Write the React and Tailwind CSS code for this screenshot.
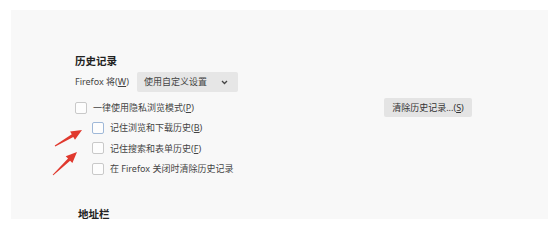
import React from "react";

function Arrow({ tail, tip }) {
  const dx = tip[0] - tail[0];
  const dy = tip[1] - tail[1];
  const len = Math.hypot(dx, dy);
  const ux = dx / len, uy = dy / len;
  const nx = -uy, ny = ux;
  const headLen = 11, headW = 4.8;
  const bx = tip[0] - headLen * ux, by = tip[1] - headLen * uy;
  const pts = [
    [tail[0] + 0.5 * nx, tail[1] + 0.5 * ny],
    [bx + 1.5 * nx, by + 1.5 * ny],
    [bx + headW * nx, by + headW * ny],
    [tip[0], tip[1]],
    [bx - headW * nx, by - headW * ny],
    [bx - 1.5 * nx, by - 1.5 * ny],
    [tail[0] - 0.5 * nx, tail[1] - 0.5 * ny],
  ];
  return <polygon points={pts.map((p) => p.join(",")).join(" ")} fill="#e0392e" />;
}

function Box({ focus }) {
  return (
    <span
      className={
        "inline-block w-[12px] h-[12px] rounded-[2px] bg-[#fdfdfd] border shrink-0 " +
        (focus ? "border-[#9fb8d8]" : "border-[#c9c9c9]")
      }
    />
  );
}

function Key({ k }) {
  return (
    <span>
      (<span className="underline underline-offset-[1px]">{k}</span>)
    </span>
  );
}

export default function App() {
  return (
    <div
      className="relative w-[548px] h-[229px] bg-white overflow-hidden text-[#444]"
      style={{ fontFamily: "'Noto Sans', 'Noto Sans CJK SC', sans-serif" }}
    >
      <div className="ml-[11px] mt-[10px] h-[209px] bg-[#f8f8f8] overflow-hidden pl-[64px] pt-[44px]">
        <div className="h-[14px] leading-[14px] text-[10.5px] font-bold text-[#222]">历史记录</div>
        <div className="mt-[4px] flex items-center h-[20px] text-[9px]">
          <span className="w-[62px]">
            Firefox 将<Key k="W" />
          </span>
          <div className="w-[101px] h-[20px] bg-[#e6e6e6] rounded-[2px] flex items-center pl-[7px] pr-[10px]">
            <span className="flex-1">使用自定义设置</span>
            <svg width="7" height="5" viewBox="0 0 7 5">
              <path d="M1 1 L3.5 3.5 L6 1" fill="none" stroke="#444" strokeWidth="1.3" />
            </svg>
          </div>
        </div>
        <div className="mt-[5.5px] w-[397px] flex items-center justify-between h-[20px] text-[9px]">
          <label className="flex items-center gap-[6px]">
            <Box />
            <span>
              一律使用隐私浏览模式<Key k="P" />
            </span>
          </label>
          <button className="w-[88px] h-[19px] bg-[#e4e4e4] rounded-[2px] text-[9px] text-[#333] flex items-center justify-center">
            清除历史记录...<Key k="S" />
          </button>
        </div>
        <div className="pl-[17px] text-[9px]">
          <label className="flex items-center gap-[6px] h-[20.5px]">
            <Box focus />
            <span>
              记住浏览和下载历史<Key k="B" />
            </span>
          </label>
          <label className="flex items-center gap-[6px] h-[20.5px]">
            <Box />
            <span>
              记住搜索和表单历史<Key k="F" />
            </span>
          </label>
          <label className="flex items-center gap-[6px] h-[20.5px]">
            <Box />
            <span>在 Firefox 关闭时清除历史记录</span>
          </label>
        </div>
        <div className="mt-[27.5px] ml-[3px] h-[14px] leading-[14px] text-[10.5px] font-bold text-[#222]">地址栏</div>
      </div>
      <svg className="absolute left-0 top-0" width="548" height="229">
        <Arrow tail={[55, 146]} tip={[82, 130]} />
        <Arrow tail={[53, 175]} tip={[77, 152]} />
      </svg>
    </div>
  );
}
